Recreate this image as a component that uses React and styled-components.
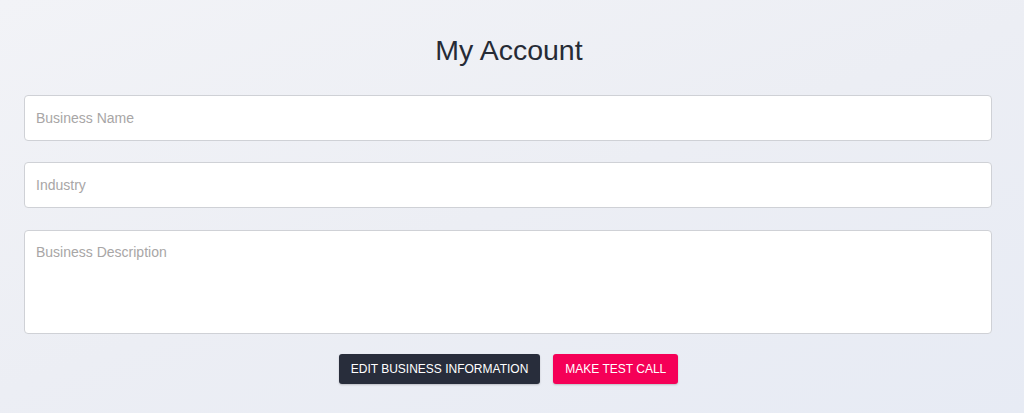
import React from 'react';
import styled, { createGlobalStyle } from 'styled-components';

const GlobalStyle = createGlobalStyle`
  html, body {
    margin: 0;
    padding: 0;
    height: 100%;
  }
  body {
    font-family: "Liberation Sans", Arial, sans-serif;
    background: linear-gradient(160deg, #f2f3f7 0%, #eceef4 50%, #e7ebf4 100%);
    min-height: 413px;
  }
`;

function App() {
  return (
    <>
      <GlobalStyle />
      <Page>
        <Title>My Account</Title>
        <Form>
          <Field type="text" placeholder="Business Name" />
          <Field type="text" placeholder="Industry" />
          <Description placeholder="Business Description" />
          <Actions>
            <Button type="button" $variant="dark">Edit Business Information</Button>
            <Button type="button" $variant="pink">Make Test Call</Button>
          </Actions>
        </Form>
      </Page>
    </>
  );
}

export default App;

const Page = styled.main`
  padding: 33px 32px 0 24px;
  min-height: 413px;
  box-sizing: border-box;
`;

const Title = styled.h1`
  margin: 0 0 28px;
  text-align: center;
  font-size: 28.5px;
  line-height: 34px;
  font-weight: 400;
  color: #262b36;
  padding-left: 2px;
`;

const Form = styled.form`
  display: flex;
  flex-direction: column;
  gap: 21px;
`;

const Field = styled.input`
  box-sizing: border-box;
  width: 100%;
  height: 46px;
  padding: 0 11px;
  border: 1px solid #cfd1d6;
  border-radius: 4px;
  background: #fff;
  font-family: "Liberation Sans", Arial, sans-serif;
  font-size: 14px;
  color: #333;
  outline: none;

  &::placeholder {
    color: #a8a6a6;
  }
`;

const Description = styled.textarea`
  box-sizing: border-box;
  width: 100%;
  height: 104px;
  margin-top: 1px;
  padding: 13px 11px;
  border: 1px solid #cfd1d6;
  border-radius: 4px;
  background: #fff;
  font-family: "Liberation Sans", Arial, sans-serif;
  font-size: 14px;
  color: #333;
  resize: none;
  outline: none;

  &::placeholder {
    color: #a8a6a6;
  }
`;

const Actions = styled.div`
  display: flex;
  justify-content: center;
  gap: 13px;
  margin-top: -1px;
  padding-left: 1px;
`;

const Button = styled.button`
  height: 30px;
  padding: 0 12px;
  border: none;
  border-radius: 3px;
  font-family: "Liberation Sans", Arial, sans-serif;
  font-size: 12px;
  text-transform: uppercase;
  color: #fff;
  cursor: pointer;
  background: ${(p) => (p.$variant === 'pink' ? '#f50057' : '#282d3b')};
  box-shadow: 0 1px 2px rgba(0, 0, 0, 0.2);
`;
